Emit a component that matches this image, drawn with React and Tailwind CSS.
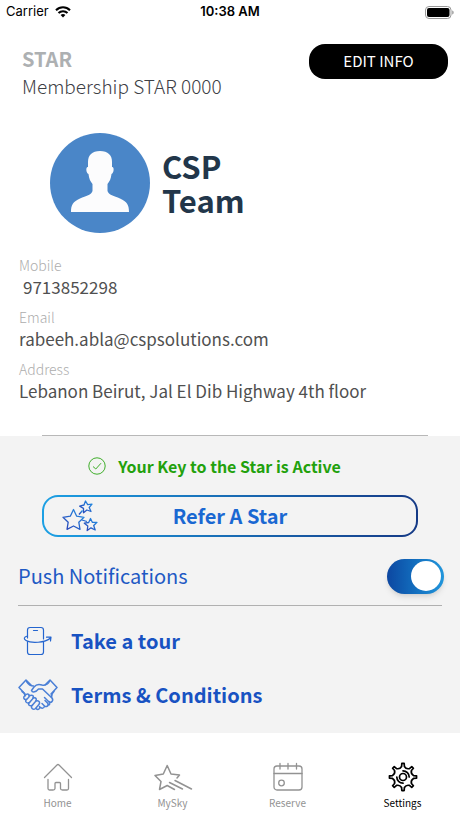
import React, { useState } from "react";

const contactFields = [
  { label: "Mobile", value: "9713852298", indent: true },
  { label: "Email", value: "rabeeh.abla@cspsolutions.com" },
  { label: "Address", value: "Lebanon Beirut, Jal El Dib Highway 4th floor" },
];

// Outline of a gear with narrow teeth and rounded valleys, centred on 16,16
function gearPath(teeth, outer, inner) {
  const step = (Math.PI * 2) / teeth;
  const point = (radius, angle) =>
    `${(16 + radius * Math.cos(angle)).toFixed(2)} ${(
      16 +
      radius * Math.sin(angle)
    ).toFixed(2)}`;
  let d = "";
  for (let i = 0; i < teeth; i++) {
    const a = i * step;
    d += `${i ? "L" : "M"}${point(inner + 1.2, a - step * 0.17)}`;
    d += `L${point(outer, a - step * 0.11)}L${point(outer, a + step * 0.11)}`;
    d += `L${point(inner + 1.2, a + step * 0.17)}`;
    d += `Q${point(inner - 1.2, a + step * 0.5)} ${point(
      inner + 1.2,
      a + step * 0.83
    )}`;
  }
  return `${d}Z`;
}

function WifiIcon() {
  return (
    <svg width="16" height="12" viewBox="0 0 16 12" fill="none" stroke="#000" strokeWidth="2.1">
      <path d="M1 4.2C5 .3 11 .3 15 4.2" />
      <path d="M3.5 7C6 4.6 10 4.6 12.5 7" />
      <path d="M5.6 8.9C7 7.6 9 7.6 10.4 8.9L8 11.4Z" fill="#000" stroke="none" />
    </svg>
  );
}

function BatteryIcon() {
  return (
    <svg width="29" height="13" viewBox="0 0 29 13">
      <rect x=".5" y=".5" width="25.5" height="12" rx="3.5" fill="none" stroke="#999" />
      <rect x="2" y="2" width="22.5" height="9" rx="2" fill="#000" />
      <path d="M27.3 4.5C29 5 29 8 27.3 8.5Z" fill="#888" />
    </svg>
  );
}

function Avatar() {
  return (
    <svg width="100" height="100" viewBox="0 0 100 100" role="img" aria-label="Profile picture">
      <circle cx="50" cy="50" r="50" fill="#4a86c8" />
      <path
        d="M50 18C42 18 38 22 38 29V34C35.500 33.500 36 40 38.500 41C39 46 40.500 48.500 42.500 51V58C41.500 62 36 63 30 65.500C23 68.500 21 72 21 79H79C79 72 77 68.500 70 65.500C64 63 58.500 62 57.500 58V51C59.500 48.500 61 46 61.500 41C64 40 64.500 33.500 62 34V29C62 22 58 18 50 18Z"
        fill="#fcfcfd"
      />
    </svg>
  );
}

function CheckIcon() {
  return (
    <svg width="18" height="18" viewBox="0 0 18 18" fill="none" stroke="#3fae2a">
      <circle cx="9" cy="9" r="8.2" />
      <path d="M5 9.500L7.800 12L13 6.200" />
    </svg>
  );
}

function StarsIcon() {
  return (
    <svg width="36" height="32" viewBox="0 0 36 32" fill="none" strokeWidth="1.3" strokeLinejoin="round">
      <defs>
        <linearGradient id="stars" x1="0" y1="1" x2="1" y2="0">
          <stop offset="0" stopColor="#2a3fb4" />
          <stop offset="1" stopColor="#2292e6" />
        </linearGradient>
      </defs>
      <g stroke="url(#stars)">
        <path d="M11.500 9.500L14.700 16.200L22 17.300L16.800 22.200L18 29.300L11.500 26L5 29.300L6.200 22.200L1 17.300L8.300 16.200Z" />
        <path d="M23.500 1L25.700 4.700L30 4.200L27.200 7.500L29 11.500L24.900 10L21.500 12.700L21.500 8.400L17.700 6.200L22 5Z" />
        <path d="M28.500 18.500L30.300 22.300L35 22.300L31.700 25.500L33.200 30L29 27.800L25.200 30.500L25.800 26L22.300 23.200L26.700 22.500Z" />
        <path d="M17 14.500L20.500 10.500" />
        <path d="M20 20L25 21.500" />
      </g>
    </svg>
  );
}

function TourIcon() {
  return (
    <svg width="30" height="30" viewBox="0 0 30 30" fill="none" stroke="#2465cf" strokeWidth="1.200" strokeLinecap="round" strokeLinejoin="round">
      <path d="M4.500 15.500V26Q4.500 28.500 7 28.500H18Q20.500 28.500 20.500 26V16M20.500 13V4Q20.500 1.500 18 1.500H7Q4.500 1.500 4.500 4V12" />
      <path d="M10.500 4.500H14.500" />
      <path d="M4.500 10C.5 11 .5 13 3 14.500C8 17.500 22 17 27.500 12M23.500 11.200L28 11.200L27.500 15" />
    </svg>
  );
}

function HandshakeIcon() {
  return (
    <svg width="40" height="32" viewBox="0 0 40 32" fill="none" stroke="#4a7fd6" strokeWidth="1.500" strokeLinecap="round" strokeLinejoin="round">
      <path d="M7 15L1 8.500L8 1L13 6" />
      <path d="M33 15L39 8.500L32 1L27 6" />
      <path d="M8.500 2.500Q11.500 7 15.500 7" />
      <path d="M31.500 2.500Q29 7 24 6C20 4.500 18 5.500 16 8L13.500 11.500C14.500 14 18 13 20.500 10H24.500L34 19C36 22 33 24.500 30.500 22.500L26.500 18.500" />
      <path d="M4 12.500Q7 14 7 17M36 12.500Q33 15 33.500 18.500" />
      <path d="M7 16.500C10 13.500 12.500 16 10.500 18.500L8.500 20.500C6 21 4.500 18.500 7 16.500Z" />
      <path d="M11 16.800C15 15 16.500 17.500 14.500 20L11.500 23.500C8.500 25 6.500 22 8.500 20.500" />
      <path d="M15 19C18.500 18 19 20.500 17.500 22.500L14.500 26C12 28 9 25.500 11.500 23.500" />
      <path d="M18 22C21.500 21 22.500 24 20.500 26L17.500 29.500C15 31.500 12 28.500 14.500 26" />
      <path d="M18 29.500C20 31.500 22.500 30 21.500 27.500M24 24.500L26.500 27C26 30 23 29.500 21.500 27.800M27 21.500L30 24.500C31 27 28 28.500 26.200 26.800M31 22.500C33 25.500 31 26.500 29.800 25" />
    </svg>
  );
}

function HomeIcon() {
  return (
    <svg width="32" height="32" viewBox="0 0 32 32" fill="none" stroke="currentColor" strokeWidth="1.300" strokeLinecap="round" strokeLinejoin="round">
      <path d="M2.500 16.500L15 4Q16 3 17 4L29.500 16.500" />
      <path d="M6 18.500V27.500Q6 29 7.500 29H11Q13 29 13 27.500V22.500Q13 21.500 14 21.500H17.500Q18.500 21.500 18.500 22.500V27.500Q18.500 29 20.500 29H25Q26.500 29 26.500 27.500V18.500" />
    </svg>
  );
}

function ShootingStarIcon() {
  return (
    <svg width="40" height="32" viewBox="0 0 40 32" fill="none" stroke="currentColor" strokeWidth="1.500" strokeLinecap="round" strokeLinejoin="round">
      <path d="M24 17L26.500 14L18 13L14.200 4.500L10.300 13L2 14.500L8 20.500L6.500 28.500L14.200 24.500L21.500 28.500" />
      <path d="M16.500 21.500L29.500 28M22 19.500L38.500 28" />
    </svg>
  );
}

function CalendarIcon() {
  return (
    <svg width="32" height="32" viewBox="0 0 32 32" fill="none" stroke="currentColor" strokeWidth="1.300" strokeLinecap="round">
      <rect x="2" y="5" width="28" height="24" rx="3" />
      <path d="M2 12.500H30M8 2.500V8M16 2.500V8M24.500 2.500V8" />
      <circle cx="9.500" cy="22" r="2.800" />
    </svg>
  );
}

function GearIcon() {
  return (
    <svg width="32" height="32" viewBox="0 0 32 32" fill="none" stroke="currentColor" strokeWidth="1.700" strokeLinecap="round" strokeLinejoin="round">
      <path d={gearPath(8, 13.6, 9.4)} />
      <circle cx="16" cy="16" r="3.500" />
      <path d="M16 9.800A6.200 6.200 0 0 1 22.200 16M16 22.200A6.200 6.200 0 0 1 9.800 16" />
    </svg>
  );
}

const tabs = [
  { name: "Home", Icon: HomeIcon },
  { name: "MySky", Icon: ShootingStarIcon },
  { name: "Reserve", Icon: CalendarIcon },
  { name: "Settings", Icon: GearIcon },
];

export default function App() {
  const [activeTab, setActiveTab] = useState("Settings");
  const [pushEnabled, setPushEnabled] = useState(true);

  return (
    <div className="min-h-screen flex flex-col bg-white font-['Noto_Sans_CJK_SC',sans-serif]">
      {/* Status bar */}
      <div className="grid grid-cols-3 items-center h-6 px-1.5 font-['Inter',sans-serif] text-[13px] text-black">
        <div className="flex items-center gap-1.5">
          <span>Carrier</span>
          <WifiIcon />
        </div>
        <div className="text-center font-semibold">10:38 AM</div>
        <div className="flex justify-end">
          <BatteryIcon />
        </div>
      </div>

      <header className="flex justify-between items-start pt-5 pl-[22px] pr-3">
        <div className="pt-0.5">
          <h1 className="text-xl leading-[26px] font-bold text-[#adb0b2]">
            STAR
          </h1>
          <p className="text-[19px] leading-7 font-light text-[#3d4045]">
            Membership STAR 0000
          </p>
        </div>
        <button className="w-[139px] h-[35px] rounded-2xl bg-black text-white text-[15px]">
          EDIT INFO
        </button>
      </header>

      <div className="flex items-center gap-3 pl-[50px] mt-[33px]">
        <Avatar />
        <h2 className="w-24 text-[31px] leading-[34px] font-bold text-[#22364a]">
          CSP Team
        </h2>
      </div>

      <dl className="flex flex-col gap-2 px-[19px] mt-[22px]">
        {contactFields.map((field) => (
          <div key={field.label}>
            <dt className="text-[14px] leading-5 font-light text-[#adadad]">
              {field.label}
            </dt>
            <dd
              className={`text-[17px] leading-6 text-[#505050] ${
                field.indent ? "pl-1" : ""
              }`}
            >
              {field.value}
            </dd>
          </div>
        ))}
      </dl>

      <hr className="mt-8 ml-[42px] mr-8 border-[#b8b8b8]" />

      <main className="flex-1 bg-[#f3f3f3] pb-[11px]">
        <div className="flex justify-center items-center gap-3 h-[59px] pr-[31px]">
          <CheckIcon />
          <span className="text-base font-bold text-[#22a10c]">
            Your Key to the Star is Active
          </span>
        </div>

        <div className="px-[42px]">
          <button className="block w-full h-[42px] p-0.5 rounded-2xl bg-linear-to-r from-[#1ca0e4] to-[#153a86]">
            <span className="grid grid-cols-[1fr_auto_1fr] items-center h-full px-[18px] rounded-[14px] bg-[#f3f3f3]">
              <StarsIcon />
              <span className="text-xl font-bold text-[#1a68d2]">
                Refer A Star
              </span>
            </span>
          </button>
        </div>

        <div className="flex justify-between items-center h-[58px] mt-2.5 pl-[18px] pr-4">
          <label htmlFor="push" className="text-xl text-[#1e59c4]">
            Push Notifications
          </label>
          <input
            id="push"
            type="checkbox"
            role="switch"
            checked={pushEnabled}
            onChange={(e) => setPushEnabled(e.target.checked)}
            className="appearance-none flex items-center w-[57px] h-[35px] rounded-full p-0.5 shadow-md bg-gray-300 checked:bg-linear-to-r checked:from-[#0d47a1] checked:to-[#2196dc] before:block before:size-[30px] before:rounded-full before:bg-white checked:before:ml-[22px]"
          />
        </div>
        <hr className="mx-[18px] border-[#b0b0b0]" />

        <nav className="flex flex-col mt-2 px-[18px] text-xl font-bold text-[#1852c2]">
          <a href="#tour" className="flex items-center gap-[13px] h-[54px]">
            <span className="w-10 flex justify-center">
              <TourIcon />
            </span>
            Take a tour
          </a>
          <a href="#terms" className="flex items-center gap-[13px] h-[54px]">
            <HandshakeIcon />
            Terms &amp; Conditions
          </a>
        </nav>
      </main>

      {/* Bottom tabs */}
      <nav className="grid grid-cols-4 h-[85px] pt-7">
        {tabs.map(({ name, Icon }) => (
          <button
            key={name}
            onClick={() => setActiveTab(name)}
            className={`flex flex-col items-center text-[10px] leading-5 ${
              activeTab === name ? "text-black" : "text-[#929292]"
            }`}
          >
            <Icon />
            {name}
          </button>
        ))}
      </nav>
    </div>
  );
}
